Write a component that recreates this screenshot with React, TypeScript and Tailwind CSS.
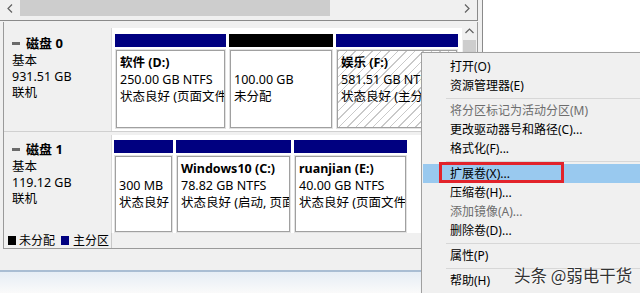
import React from "react";

const FONT = "font-['Noto_Sans','Noto_Sans_CJK_SC',sans-serif]";

function Part({
  w,
  bar,
  lines,
  hatch,
  firstBold = true,
}: {
  w: number;
  bar: string;
  lines: string[];
  hatch?: boolean;
  firstBold?: boolean;
}) {
  return (
    <div className="flex flex-col shrink-0" style={{ width: w }}>
      <div className={`h-[13px] shrink-0 ${bar}`} />
      <div
        className={`mt-[3px] flex-1 border border-[#a0a0a0] shadow-[0_0_0_1px_#e2e2e2] ml-[1px] mr-[1px] mb-[1px] pl-[3px] pt-[3px] overflow-hidden whitespace-nowrap ${
          hatch
            ? "bg-[repeating-linear-gradient(135deg,#c9c9c9_0px,#c9c9c9_1px,#ffffff_1px,#ffffff_6px)]"
            : "bg-white"
        }`}
      >
        {lines.map((l, i) => (
          <div
            key={i}
            className={`h-[17px] leading-[17px] text-[12.5px] ${
              i === 0 && firstBold ? "font-bold" : ""
            } text-black`}
          >
            {l}
          </div>
        ))}
      </div>
    </div>
  );
}

function Label({ name, size, pt }: { name: string; size: string; pt: string }) {
  return (
    <div className={`w-[108px] shrink-0 bg-[#f0f0f0] border-r border-[#d8d8d8] pl-[8px] ${pt} text-[12.5px] text-black whitespace-nowrap`}>
      <div className="h-[19px] leading-[19px] flex items-center font-bold text-[13px]">
        <span className="inline-block w-[8px] h-[3px] bg-[#6a6a6a] mr-[6px]" />
        {name}
      </div>
      <div className="h-[16px] leading-[16px]">基本</div>
      <div className="h-[16px] leading-[16px]">{size}</div>
      <div className="h-[16px] leading-[16px]">联机</div>
    </div>
  );
}

type Item = { t: string; dis?: boolean; hl?: boolean } | "sep";

const MENU: Item[] = [
  { t: "打开(O)" },
  { t: "资源管理器(E)" },
  "sep",
  { t: "将分区标记为活动分区(M)", dis: true },
  { t: "更改驱动器号和路径(C)..." },
  { t: "格式化(F)..." },
  "sep",
  { t: "扩展卷(X)...", hl: true },
  { t: "压缩卷(H)..." },
  { t: "添加镜像(A)...", dis: true },
  { t: "删除卷(D)..." },
  "sep",
  { t: "属性(P)" },
  "sep",
  { t: "帮助(H)" },
];

export default function App() {
  return (
    <div
      className={`relative w-[640px] h-[293px] overflow-hidden bg-[#f0f0f0] flex ${FONT}`}
    >
      {/* left window */}
      <div className="w-[478px] shrink-0 flex flex-col">
        {/* top pane bottom with horizontal scrollbar */}
        <div className="h-[21px] shrink-0 border-b border-r border-[#8a8a8a] flex items-start bg-[#f0f0f0]">
          <div className="w-[20px] h-[17px] flex items-center justify-center">
            <svg width="6" height="9" viewBox="0 0 6 9">
              <path d="M5 0.5 L1 4.5 L5 8.5" fill="none" stroke="#606060" strokeWidth="1.2" />
            </svg>
          </div>
          <div className="w-[310px] h-[16px] bg-[#cdcdcd]" />
          <div className="flex-1" />
          <div className="w-[20px] h-[17px] flex items-center justify-center">
            <svg width="6" height="9" viewBox="0 0 6 9">
              <path d="M1 0.5 L5 4.5 L1 8.5" fill="none" stroke="#606060" strokeWidth="1.2" />
            </svg>
          </div>
        </div>
        {/* graphical pane */}
        <div className="mt-[1px] ml-[3px] h-[227px] shrink-0 border-l border-b border-r border-[#9a9a9a] flex bg-[#f0f0f0]">
          <div className="flex-1 flex flex-col pt-[6px]">
            {/* disk 0 */}
            <div className="h-[103px] shrink-0 flex bg-white">
              <Label name="磁盘 0" size="931.51 GB" pt="pt-[6px]" />
              <div className="flex-1 flex gap-[3px] pl-[3px] pt-[6px] pb-[2px]">
                <Part w={111} bar="bg-[#000080]" lines={["软件  (D:)", "250.00 GB NTFS", "状态良好 (页面文件"]} />
                <Part w={104} bar="bg-black" lines={["", "100.00 GB", "未分配"]} firstBold={false} />
                <Part w={122} bar="bg-[#000080]" hatch lines={["娱乐  (F:)", "581.51 GB NTFS", "状态良好 (主分区)"]} />
              </div>
            </div>
            <div className="h-[4px] shrink-0 border-t border-[#d0d0d0]" />
            {/* disk 1 */}
            <div className="h-[98px] shrink-0 flex bg-white">
              <Label name="磁盘 1" size="119.12 GB" pt="pt-[5px]" />
              <div className="flex-1 flex gap-[3px] pl-[2px] pt-[5px] pb-[0px]">
                <Part w={59} bar="bg-[#000080]" lines={["", "300 MB", "状态良好"]} firstBold={false} />
                <Part w={115} bar="bg-[#000080]" lines={["Windows10  (C:)", "78.82 GB NTFS", "状态良好 (启动, 页面"]} />
                <Part w={113} bar="bg-[#000080]" lines={["ruanjian  (E:)", "40.00 GB NTFS", "状态良好 (页面文件"]} />
              </div>
            </div>
            {/* legend */}
            <div className="flex-1 min-h-0 flex">
              <div className="pr-[2px] border-r border-[#c8c8c8] flex items-center pl-[4px] text-[12px] text-black leading-[15px] whitespace-nowrap">
                <span className="inline-block w-[8px] h-[9px] bg-black mr-[3px]" />
                <span>未分配</span>
                <span className="inline-block w-[8px] h-[9px] bg-[#000080] ml-[6px] mr-[4px]" />
                <span>主分区</span>
              </div>
            </div>
          </div>
          {/* vertical scrollbar */}
          <div className="w-[15px] shrink-0 flex flex-col items-center bg-[#f0f0f0]">
            <div className="h-[18px] flex items-center justify-center">
              <svg width="9" height="6" viewBox="0 0 9 6">
                <path d="M0.5 5 L4.5 1 L8.5 5" fill="none" stroke="#606060" strokeWidth="1.2" />
              </svg>
            </div>
            <div className="w-[13px] flex-1 bg-[#cdcdcd]" />
          </div>
        </div>
        <div className="h-[21px] shrink-0" />
        <div className="h-[2px] shrink-0 bg-[#a9bdd3]" />
        <div className="flex-1 bg-[linear-gradient(#e6edf5,#fafafa)]" />
      </div>
      {/* right pane */}
      <div className="ml-[4px] flex-1 bg-white border-l border-[#8a8a8a]" />

      {/* context menu */}
      <div className="absolute left-[421px] top-[52px] w-[230px] h-[260px] bg-[#f0f0f0] border border-[#a0a0a0] pt-[4px] shadow-[2px_2px_3px_rgba(0,0,0,0.2)]">
        {MENU.map((m, i) =>
          m === "sep" ? (
            <div key={i} className="h-[6px] flex items-center pl-[24px]">
              <div className="h-px flex-1 bg-[#d7d7d7]" />
            </div>
          ) : (
            <div
              key={i}
              className={`h-[19px] ml-[1px] pl-[27px] flex items-center text-[12px] whitespace-nowrap ${
                m.hl ? "bg-[#99c9ef]" : ""
              } ${m.dis ? "text-[#6d6d6d]" : "text-black"}`}
            >
              {m.t}
            </div>
          )
        )}
      </div>

      {/* red annotation box */}
      <div className="absolute left-[439px] top-[162px] w-[125px] h-[21px] border-[3px] border-[#e2232b]" />

      {/* watermark */}
      <div className="absolute left-[514px] top-[265px] text-[16.5px] leading-[20px] text-[#333333] whitespace-nowrap font-['Noto_Sans_CJK_SC',sans-serif] [text-shadow:0_0_2px_#fff,0_0_2px_#fff]">
        头条 @弱电干货
      </div>
    </div>
  );
}
